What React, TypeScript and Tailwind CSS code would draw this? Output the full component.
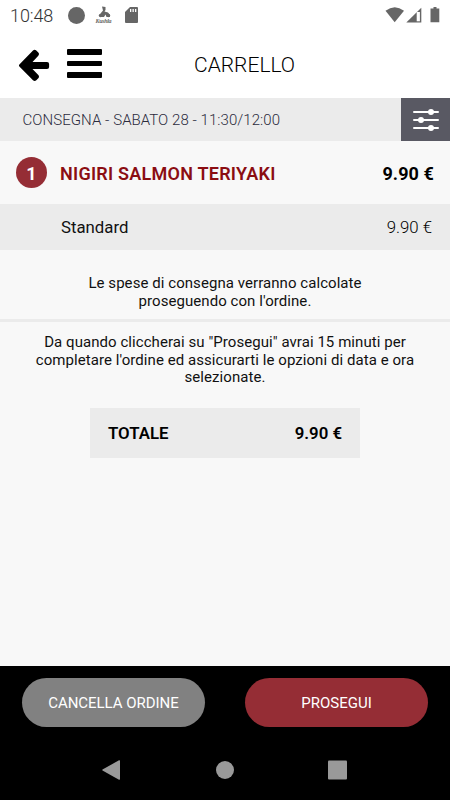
import React from "react";

function StatusBar() {
  return (
    <div className="flex h-[30px] items-center justify-between pl-[10px] pr-[9px]">
      <div className="flex items-center">
        <span className="w-[58px] pt-px text-[18px] font-light leading-[30px] tracking-[-0.1px] text-[#333]">10:48</span>
        <span className="size-[17px] rounded-full bg-[#666]" />
        <svg className="ml-[10px]" width="18" height="20" viewBox="0 0 18 20" fill="#666">
          <path d="M7 1.500L10.500 2V5L9.500 6.500L13 7.500L15 10V12H11.500L10.500 9.500L9 12H5L5.500 8.500L8 5.500Z" />
          <circle cx="5.500" cy="10.500" r="1.700" />
          <circle cx="13.500" cy="10.500" r="1.700" />
          <text x="0.500" y="18" fontFamily="Liberation Serif, serif" fontStyle="italic" fontWeight="bold" fontSize="6" textLength="16">Kushla</text>
        </svg>
        <svg className="ml-[12px]" width="13" height="16" viewBox="0 0 13 16" fill="#666">
          <path d="M5 0h7a1 1 0 0 1 1 1v14a1 1 0 0 1-1 1H1a1 1 0 0 1-1-1V5z" />
          <path d="M5 2h1.300v3H5zM7.500 2h1.300v3H7.500zM10 2h1.300v3H10z" fill="#fff" />
        </svg>
      </div>
      <svg width="56" height="16" viewBox="385 7 56 16" fill="#666">
        <path d="M385.500 10.800Q394.700 3.600 404 10.800L394.700 22.300z" />
        <path d="M421.300 7.800v14.700h-15z" />
        <path d="M416.700 12h3.200v9.300h-3.200z" fill="#fff" />
        <path d="M433.500 7h3v1.500h2.800v13.800h-8.800V8.500h3z" />
      </svg>
    </div>
  );
}

function Header() {
  return (
    <header className="grid h-[68px] grid-cols-[194px_1fr] items-start">
      <div className="flex items-start pl-[19px] pt-[18px]">
        <svg width="31" height="34" viewBox="19 48 31 34">
          <path d="M19.600 64.300L33 50.500Q34.700 49 36.300 50.500L38.300 52.400Q39.700 53.900 38.300 55.700L32.500 61.900H47Q49.100 61.900 49.100 64V67Q49.100 69.100 47 69.100H32.500L38.300 75Q39.700 76.700 38.300 78.300L36.300 80.200Q34.700 81.700 33 80.200L19.600 66.800Q18.300 65.500 19.600 64.300Z" />
        </svg>
        <div className="ml-[17px] mt-px flex w-[35px] flex-col gap-[6px]">
          <span className="h-[5.700px] rounded-[1px] bg-black" />
          <span className="h-[5.700px] rounded-[1px] bg-black" />
          <span className="h-[5.700px] rounded-[1px] bg-black" />
        </div>
      </div>
      <h1 className="pt-[20px] text-[21px] font-[350] leading-[30px] text-black">CARRELLO</h1>
    </header>
  );
}

export default function App() {
  return (
    <div className="flex h-[800px] w-[450px] flex-col overflow-hidden bg-white font-['Roboto',sans-serif] text-black">
      <StatusBar />
      <Header />
      <main className="flex flex-1 flex-col bg-[#f8f8f8]">
        <div className="flex h-[43px] items-center justify-between bg-[#ebebeb] pl-[22.500px]">
          <span className="pt-[2px] text-[15px] font-[350] tracking-[0.060px] text-[#2b2b3d]">CONSEGNA - SABATO 28 - 11:30/12:00</span>
          <div className="flex h-[43px] w-[49px] items-center justify-center bg-[#595963]">
            <svg width="28" height="24" viewBox="411 108 28 24" fill="#fff" stroke="#fff" strokeWidth="2" strokeLinecap="round">
              <path d="M413 112h24M413 120h24M413 128h24" />
              <circle cx="430" cy="112" r="2" />
              <circle cx="420" cy="120" r="2" />
              <circle cx="430" cy="128" r="2" />
            </svg>
          </div>
        </div>
        <div className="flex h-[63px] items-center pl-[16px] pr-[16px] text-[18px] font-bold">
          <span className="flex size-[31px] items-center justify-center rounded-full bg-[#952d35] pt-px text-white">1</span>
          <span className="ml-[13px] flex-1 pt-[2px] font-semibold tracking-[0.240px] text-[#8b0d12]">NIGIRI SALMON TERIYAKI</span>
          <span className="pt-[2px] tracking-[0.100px]">9.90 €</span>
        </div>
        <div className="flex h-[46px] items-center justify-between bg-[#ebebeb] pl-[61px] pr-[18px] pt-[2px] text-[16.800px]">
          <span className="text-[#111]">Standard</span>
          <span className="font-[350]">9.90 €</span>
        </div>
        <p className="h-[69px] pt-[25px] text-center text-[15px] font-[380] leading-[17.500px] tracking-[0.060px] text-[#111]">
          Le spese di consegna verranno calcolate<br />proseguendo con l'ordine.
        </p>
        <div className="h-[3px] bg-[#ebebeb]" />
        <p className="h-[86px] pt-[12px] text-center text-[15px] font-[380] leading-[17.500px] tracking-[0.060px] text-[#111]">
          Da quando cliccherai su "Prosegui" avrai 15 minuti per<br />completare l'ordine ed assicurarti le opzioni di data e ora<br />selezionate.
        </p>
        <div className="mx-[90px] flex h-[50px] items-center justify-between bg-[#ebebeb] px-[18px] pt-[2px] text-[16.800px] font-semibold">
          <span>TOTALE</span>
          <span>9.90 €</span>
        </div>
      </main>
      <footer className="h-[134px] bg-black">
        <div className="flex justify-between pl-[22px] pr-[22px] pt-[12px] text-[15px] text-white">
          <button className="h-[49px] w-[183px] rounded-full bg-[#818181] pt-[2px] tracking-[-0.030px]">CANCELLA ORDINE</button>
          <button className="h-[49px] w-[183px] rounded-full bg-[#952d35] pt-[2px]">PROSEGUI</button>
        </div>
        <svg className="mt-[28px]" width="450" height="30" viewBox="0 755 450 30" fill="#999">
          <path d="M119 760.300Q120 760 120 761V779Q120 780 119 779.700L102.500 770.500Q102 770 102.500 769.500Z" />
          <circle cx="225" cy="770" r="9" />
          <rect x="328" y="760.500" width="19" height="19" rx="1" />
        </svg>
      </footer>
    </div>
  );
}
